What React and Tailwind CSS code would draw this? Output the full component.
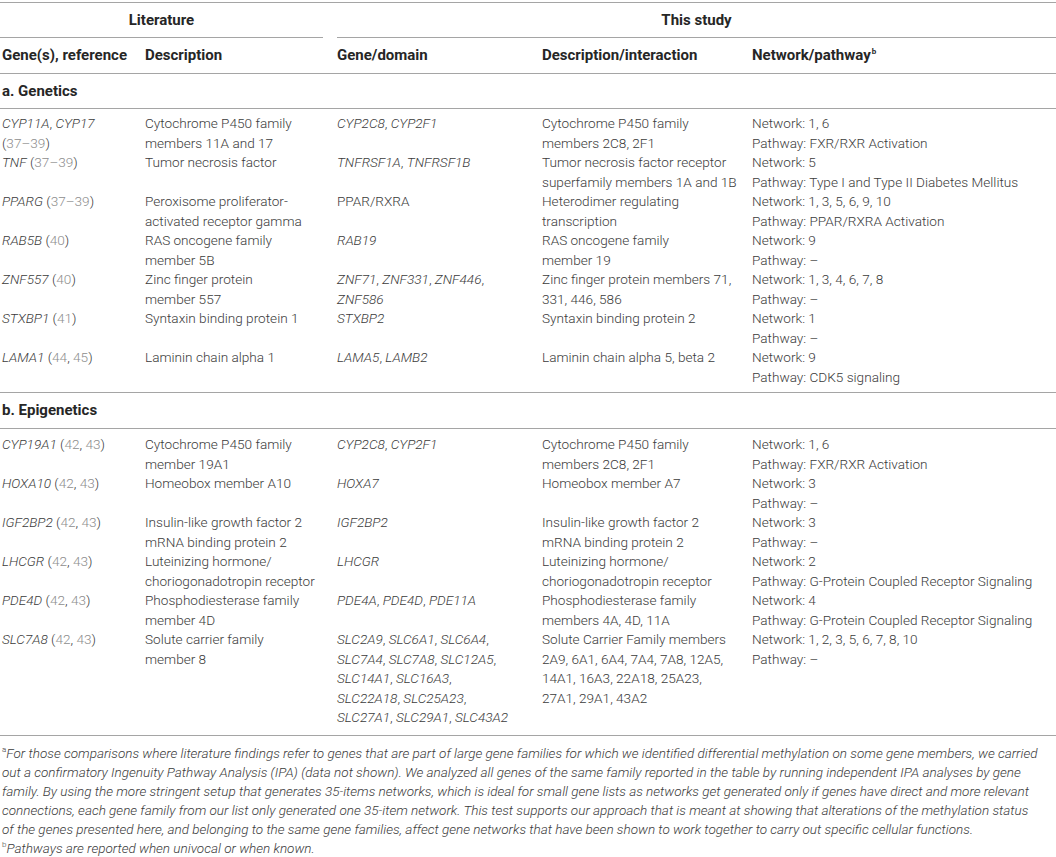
import React from "react";

const cols = "grid grid-cols-[145px_192px_205px_210px_1fr]";

const G = ({ children }) => <i>{children}</i>;
const R = ({ children }) => <span className="text-[#8e8e8e]">{children}</span>;

const genetics = [
  {
    gene: [<><G>CYP11A</G>, <G>CYP17</G></>, <>(<R>37–39</R>)</>],
    desc: ["Cytochrome P450 family", "members 11A and 17"],
    domain: [<><G>CYP2C8</G>, <G>CYP2F1</G></>],
    interaction: ["Cytochrome P450 family", "members 2C8, 2F1"],
    network: ["Network: 1, 6", "Pathway: FXR/RXR Activation"],
  },
  {
    gene: [<><G>TNF</G> (<R>37–39</R>)</>],
    desc: ["Tumor necrosis factor"],
    domain: [<><G>TNFRSF1A</G>, <G>TNFRSF1B</G></>],
    interaction: ["Tumor necrosis factor receptor", "superfamily members 1A and 1B"],
    network: ["Network: 5", "Pathway: Type I and Type II Diabetes Mellitus"],
  },
  {
    gene: [<><G>PPARG</G> (<R>37–39</R>)</>],
    desc: ["Peroxisome proliferator-", "activated receptor gamma"],
    domain: ["PPAR/RXRA"],
    interaction: ["Heterodimer regulating", "transcription"],
    network: ["Network: 1, 3, 5, 6, 9, 10", "Pathway: PPAR/RXRA Activation"],
  },
  {
    gene: [<><G>RAB5B</G> (<R>40</R>)</>],
    desc: ["RAS oncogene family", "member 5B"],
    domain: [<G>RAB19</G>],
    interaction: ["RAS oncogene family", "member 19"],
    network: ["Network: 9", "Pathway: –"],
  },
  {
    gene: [<><G>ZNF557</G> (<R>40</R>)</>],
    desc: ["Zinc finger protein", "member 557"],
    domain: [<><G>ZNF71</G>, <G>ZNF331</G>, <G>ZNF446</G>,</>, <G>ZNF586</G>],
    interaction: ["Zinc finger protein members 71,", "331, 446, 586"],
    network: ["Network: 1, 3, 4, 6, 7, 8", "Pathway: –"],
  },
  {
    gene: [<><G>STXBP1</G> (<R>41</R>)</>],
    desc: ["Syntaxin binding protein 1"],
    domain: [<G>STXBP2</G>],
    interaction: ["Syntaxin binding protein 2"],
    network: ["Network: 1", "Pathway: –"],
  },
  {
    gene: [<><G>LAMA1</G> (<R>44</R>, <R>45</R>)</>],
    desc: ["Laminin chain alpha 1"],
    domain: [<><G>LAMA5</G>, <G>LAMB2</G></>],
    interaction: ["Laminin chain alpha 5, beta 2"],
    network: ["Network: 9", "Pathway: CDK5 signaling"],
  },
];

const ref4243 = <> (<R>42</R>, <R>43</R>)</>;

const epigenetics = [
  {
    gene: [<><G>CYP19A1</G>{ref4243}</>],
    desc: ["Cytochrome P450 family", "member 19A1"],
    domain: [<><G>CYP2C8</G>, <G>CYP2F1</G></>],
    interaction: ["Cytochrome P450 family", "members 2C8, 2F1"],
    network: ["Network: 1, 6", "Pathway: FXR/RXR Activation"],
  },
  {
    gene: [<><G>HOXA10</G>{ref4243}</>],
    desc: ["Homeobox member A10"],
    domain: [<G>HOXA7</G>],
    interaction: ["Homeobox member A7"],
    network: ["Network: 3", "Pathway: –"],
  },
  {
    gene: [<><G>IGF2BP2</G>{ref4243}</>],
    desc: ["Insulin-like growth factor 2", "mRNA binding protein 2"],
    domain: [<G>IGF2BP2</G>],
    interaction: ["Insulin-like growth factor 2", "mRNA binding protein 2"],
    network: ["Network: 3", "Pathway: –"],
  },
  {
    gene: [<><G>LHCGR</G>{ref4243}</>],
    desc: ["Luteinizing hormone/", "choriogonadotropin receptor"],
    domain: [<G>LHCGR</G>],
    interaction: ["Luteinizing hormone/", "choriogonadotropin receptor"],
    network: ["Network: 2", "Pathway: G-Protein Coupled Receptor Signaling"],
  },
  {
    gene: [<><G>PDE4D</G>{ref4243}</>],
    desc: ["Phosphodiesterase family", "member 4D"],
    domain: [<><G>PDE4A</G>, <G>PDE4D</G>, <G>PDE11A</G></>],
    interaction: ["Phosphodiesterase family", "members 4A, 4D, 11A"],
    network: ["Network: 4", "Pathway: G-Protein Coupled Receptor Signaling"],
  },
  {
    gene: [<><G>SLC7A8</G>{ref4243}</>],
    desc: ["Solute carrier family", "member 8"],
    domain: [
      <><G>SLC2A9</G>, <G>SLC6A1</G>, <G>SLC6A4</G>,</>,
      <><G>SLC7A4</G>, <G>SLC7A8</G>, <G>SLC12A5</G>,</>,
      <><G>SLC14A1</G>, <G>SLC16A3</G>,</>,
      <><G>SLC22A18</G>, <G>SLC25A23</G>,</>,
      <><G>SLC27A1</G>, <G>SLC29A1</G>, <G>SLC43A2</G></>,
    ],
    interaction: [
      "Solute Carrier Family members",
      "2A9, 6A1, 6A4, 7A4, 7A8, 12A5,",
      "14A1, 16A3, 22A18, 25A23,",
      "27A1, 29A1, 43A2",
    ],
    network: ["Network: 1, 2, 3, 5, 6, 7, 8, 10", "Pathway: –"],
  },
];

const Cell = ({ lines, className = "" }) => (
  <div className={className}>
    {lines.map((line, i) => (
      <div key={i} className="whitespace-nowrap">
        {line}
      </div>
    ))}
  </div>
);

const Section = ({ rows, className }) => (
  <div className={`border-b border-[#a5a5a5] leading-[19.5px] ${className}`}>
    {rows.map((row, i) => (
      <div key={i} className={`${cols} min-h-[39px]`}>
        <Cell lines={row.gene} className="pl-[2px]" />
        <Cell lines={row.desc} />
        <Cell lines={row.domain} />
        <Cell lines={row.interaction} />
        <Cell lines={row.network} />
      </div>
    ))}
  </div>
);

export default function App() {
  return (
    <div className="w-[1056px] min-h-[857px] bg-white pt-[2px] font-['Roboto','Liberation_Sans',sans-serif] text-[13.6px] font-light text-[#3b3b3b]">
      <div className="border-t border-[#a5a5a5]">
        {/* group headers */}
        <div className={`${cols} font-bold text-[15px] text-[#262626]`}>
          <div className="col-span-2 mr-[14px] h-[35px] border-b border-[#a5a5a5] flex items-center justify-center">
            Literature
          </div>
          <div className="col-span-3 h-[35px] border-b border-[#a5a5a5] flex items-center justify-center">
            This study
          </div>
        </div>

        {/* column headers */}
        <div className={`${cols} h-[36px] items-center border-b border-[#a5a5a5] font-bold text-[15px] text-[#262626]`}>
          <div className="pl-[2px]">Gene(s), reference</div>
          <div>Description</div>
          <div>Gene/domain</div>
          <div>Description/interaction</div>
          <div>
            Network/pathway<sup className="text-[8px] ml-px top-[-6px]">b</sup>
          </div>
        </div>

        <div className="h-[35px] flex items-center pl-[2px] border-b border-[#a5a5a5] font-bold text-[15px] text-[#262626]">
          a. Genetics
        </div>
        <Section rows={genetics} className="pt-[5px] pb-[5px]" />

        <div className="h-[36px] flex items-center pl-[2px] border-b border-[#a5a5a5] font-bold text-[15px] text-[#262626]">
          b. Epigenetics
        </div>
        <Section rows={epigenetics} className="pt-[6px] pb-[7px]" />

        {/* footnotes */}
        <div className="pt-[8px] pl-[2px] italic leading-[19px] text-[13.5px]">
          <div className="whitespace-nowrap">
            <sup className="text-[8px] not-italic top-[-6px]">a</sup>For those comparisons where literature findings refer to genes that are part of large gene families for which we identified differential methylation on some gene members, we carried
          </div>
          <div className="whitespace-nowrap">
            out a confirmatory Ingenuity Pathway Analysis (IPA) (data not shown). We analyzed all genes of the same family reported in the table by running independent IPA analyses by gene
          </div>
          <div className="whitespace-nowrap">
            family. By using the more stringent setup that generates 35-items networks, which is ideal for small gene lists as networks get generated only if genes have direct and more relevant
          </div>
          <div className="whitespace-nowrap">
            connections, each gene family from our list only generated one 35-item network. This test supports our approach that is meant at showing that alterations of the methylation status
          </div>
          <div className="whitespace-nowrap">
            of the genes presented here, and belonging to the same gene families, affect gene networks that have been shown to work together to carry out specific cellular functions.
          </div>
          <div className="whitespace-nowrap">
            <sup className="text-[8px] not-italic top-[-6px]">b</sup>Pathways are reported when univocal or when known.
          </div>
        </div>
      </div>
    </div>
  );
}
